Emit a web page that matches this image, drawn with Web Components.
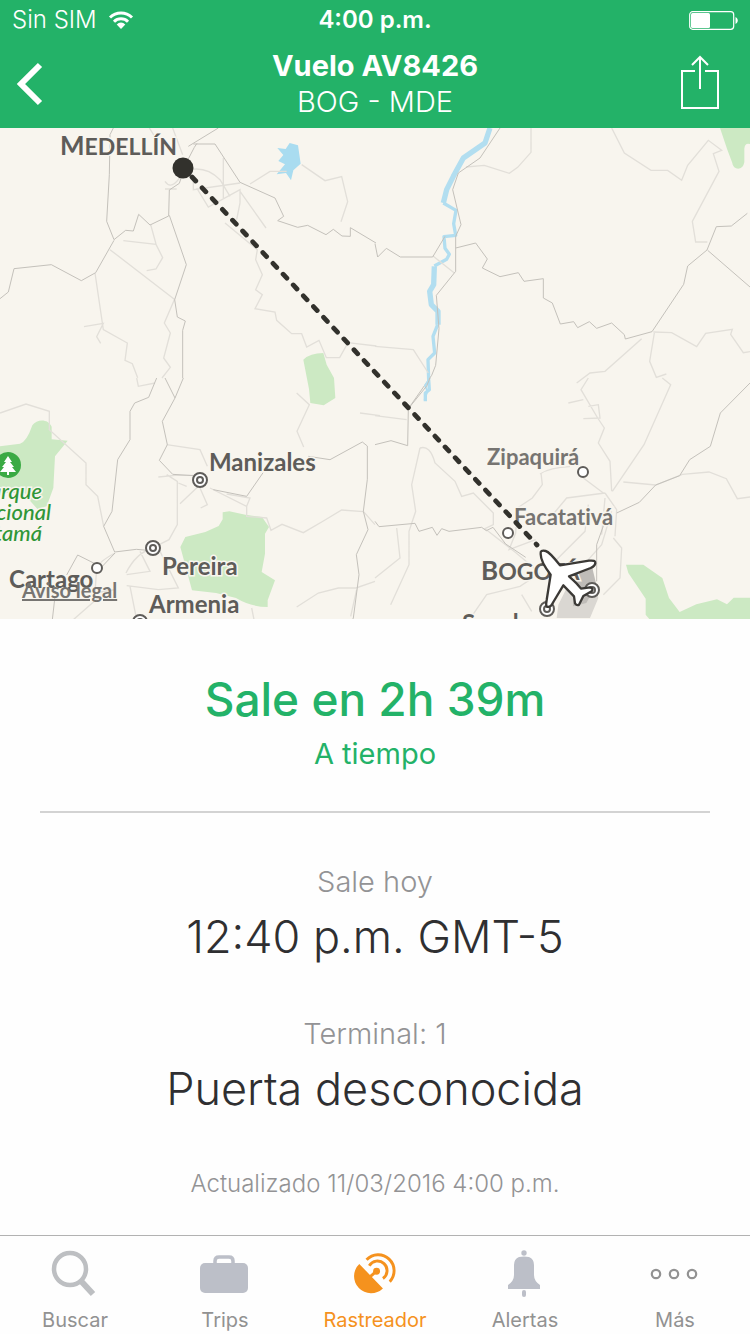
<!DOCTYPE html>
<html lang="es">
  <head>
    <meta charset="UTF-8" />
    <meta name="viewport" content="width=device-width, initial-scale=1.0" />
    <title>Vuelo AV8426</title>
    <style>
      body {
        margin: 0;
        font-family: Inter, "Liberation Sans", sans-serif;
        background-color: #fefefe;
        color: #2f2f31;
      }
    </style>
  </head>
  <body>
    <flight-screen>
      <status-bar slot="top">
        <span slot="carrier">Sin SIM</span>
        <span slot="time">4:00 p.m.</span>
      </status-bar>
      <nav-bar slot="top">
        <span slot="title">Vuelo AV8426</span>
        <span slot="subtitle">BOG - MDE</span>
      </nav-bar>

      <flight-map></flight-map>
      <flight-countdown>
        Sale en 2h 39m
        <span slot="state">A tiempo</span>
      </flight-countdown>
      <flight-details>
        <detail-item label="Sale hoy">12:40 p.m. GMT-5</detail-item>
        <detail-item label="Terminal: 1">Puerta desconocida</detail-item>
        <span slot="updated">Actualizado 11/03/2016 4:00 p.m.</span>
      </flight-details>

      <tab-bar slot="bottom">
        <tab-item icon="search">Buscar</tab-item>
        <tab-item icon="trips">Trips</tab-item>
        <tab-item icon="tracker" active>Rastreador</tab-item>
        <tab-item icon="alerts">Alertas</tab-item>
        <tab-item icon="more">Más</tab-item>
      </tab-bar>
    </flight-screen>
  </body>

  <template id="flight-screen">
    <style>
      :host {
        display: flex;
        flex-direction: column;
        min-height: 100vh;
      }
      header {
        background-color: #23b268;
        color: white;
      }
      main {
        flex: 1;
      }
    </style>
    <header><slot name="top"></slot></header>
    <main><slot></slot></main>
    <slot name="bottom"></slot>
  </template>

  <template id="status-bar">
    <style>
      :host {
        display: grid;
        grid-template-columns: 1fr auto 1fr;
        align-items: center;
        padding: 0 12px;
        font-size: 24px;
        line-height: 40px;
      }
      .left {
        display: flex;
        align-items: center;
        gap: 11px;
        font-weight: 300;
      }
      .time {
        font-weight: 600;
      }
      .battery {
        justify-self: end;
      }
      svg {
        display: block;
      }
    </style>
    <div class="left">
      <slot name="carrier"></slot>
      <svg width="26" height="20" viewBox="0 0 26 20" fill="none" stroke="white" stroke-width="3">
        <path d="M2 7.5a16 16 0 0 1 22 0" />
        <path d="M6 11.7a10 10 0 0 1 14 0" />
        <path d="M13 19l-4.3-4.6a6 6 0 0 1 8.600 0z" fill="white" stroke="none" />
      </svg>
    </div>
    <div class="time"><slot name="time"></slot></div>
    <svg class="battery" width="49" height="19" viewBox="0 0 49 19">
      <rect x="0.700" y="0.700" width="44" height="17.600" rx="3" fill="none" stroke="white" stroke-width="1.200" />
      <rect x="2" y="2" width="19" height="15" rx="1.500" fill="white" />
      <path d="M46.500 6c3 1.500 3 5.500 0 7z" fill="white" />
    </svg>
  </template>

  <template id="nav-bar">
    <style>
      :host {
        display: grid;
        grid-template-columns: 1fr auto 1fr;
        align-items: center;
        padding: 8px 16px;
      }
      .titles {
        text-align: center;
      }
      h1 {
        margin: 0;
        font-size: 29px;
        line-height: 36px;
        font-weight: 700;
      }
      p {
        margin: 0;
        font-size: 29px;
        line-height: 36px;
        font-weight: 300;
      }
      button {
        border: 0;
        padding: 0;
        background: none;
        color: inherit;
        justify-self: start;
      }
      .share {
        justify-self: end;
        padding: 0 14px 4px;
      }
      svg {
        display: block;
      }
    </style>
    <button aria-label="Atrás">
      <svg width="28" height="44" viewBox="0 0 28 44" fill="none" stroke="currentColor" stroke-width="6">
        <path d="M24 3L5 22l19 19" />
      </svg>
    </button>
    <div class="titles">
      <h1><slot name="title"></slot></h1>
      <p><slot name="subtitle"></slot></p>
    </div>
    <button class="share" aria-label="Compartir">
      <svg width="40" height="54" viewBox="0 0 40 54" fill="none" stroke="currentColor" stroke-width="2">
        <path d="M15 16H2v37h36V16H25M20 34V2M12 10l8-8 8 8" />
      </svg>
    </button>
  </template>

  <!-- The map is split in four tiles, each with its own coordinate system -->
  <template id="flight-map">
    <style>
      :host {
        display: block;
        position: relative;
        overflow: hidden;
        background-color: #f8f5ee;
      }
      .map {
        display: block;
        width: 100%;
        height: auto;
      }
      .tile {
        overflow: visible;
      }
      .park {
        fill: #cce9c3;
      }
      .water {
        fill: none;
        stroke: #b2def0;
        stroke-linejoin: round;
      }
      .road {
        fill: none;
        stroke: #c4c1bb;
        stroke-width: 3;
      }
      .minor {
        fill: none;
        stroke: #e2dfd9;
        stroke-width: 4;
      }
      .label {
        font-family: Lato, sans-serif;
        font-size: 24px;
        font-weight: 700;
        font-variant-ligatures: none;
        fill: #5e5c59;
        stroke: #f8f5ee;
        stroke-width: 3px;
        paint-order: stroke;
      }
      .town {
        font-size: 22px;
        fill: #767471;
      }
      .capital {
        font-size: 23px;
      }
      .initial {
        font-size: 26px;
      }
      .green {
        font-size: 22px;
        font-style: italic;
        font-weight: 500;
        fill: #2f9637;
        text-anchor: end;
      }
      .pin {
        fill: #fff;
        stroke: #5e5c59;
        stroke-width: 2;
      }
      a {
        position: absolute;
        left: 22px;
        bottom: 17px;
        font-family: Lato, sans-serif;
        font-size: 20px;
        line-height: 24px;
        font-weight: 700;
        color: #777572;
      }
    </style>
    <svg class="map" viewBox="0 0 750 491">
      <svg class="tile" width="375" height="250" viewBox="0 0 1125 750">
        <path class="park" d="M910 695q20-20 60-20l10 35 22 40 4 60-35 22-40-7-4-42z" />
        <path d="M832 60l25 3 12-18 25 7 8 55-22 20-7 30-15-22-28 4 25-30-20-10 15-18z" fill="#a9dcf0" />
        <path class="minor" d="M448 0l22 35M518 0l30 80M570 125q50-10 90 30l30 50M670 90v120M580 140v45l140-20M590 180l35 57 95-52v40l-10 50M720 190l78 110M370 338l98 11 20 40-20 34-28 5M452 290l16 58M330 365l195 150M285 435l25 170 72 40-7 52 22 10 16 42M252 596l58-10-20 40 12 20M523 515l-30 70 18 30-20 75 20 28-25 32M675 285l97 80-5 30 20 45-20 45 20 15-22 42 60 10 5 25 45 40h30l15 40 37-20 22 52h40l25-45 85 10M750 168l60-38h50M905 110l70 48 50-12 18 75-20 60M495 160q20 30 50-20M495 183h35" />
        <path class="road" d="M340 0l-10 20-2 120-8 140 22 55 35-28 23 2 16-50 34 32 56-27 2-78 30-20 20-60 25-48 8-12M565 55l90-55M580 48h65l75 115 105 47 26 55-18 13 60 20 30-6 55 28 22-16 26 20 25 1v-26l77 46M508 262l51 148-35 105 8 52 24 12-8 28v143M342 337l-55 97-43 24-90-48-112 12-17 70-25 20" />
      </svg>

      <svg class="tile" x="375" width="375" height="250" viewBox="0 0 1125 750">
        <path class="park" d="M1035 0h95v50q-20-10-22 12v40c-4 28-34 24-36 3l-15-40z" />
        <path class="water" stroke-width="16" d="M345 0l-15 45-65 45-30 55-20 40-10 40M178 415l-2 55-12 20 5 40 20 20v40" />
        <path class="water" stroke-width="10" d="M205 225l38 22-7 40 6 35-35 4 3 35 13 18-8 15-37 20M188 590l-14 35 5 50-20 20 2 60 2 30-12 10v25" />
        <path class="minor" d="M468 0v73l-40 45-25 18-75-24-55 5M710 0l38 75 80 52h50l42 30 18-45 62-75 40 30-25 10 17 53-80 150 10 62h35M835 612l55 2 75 42 27-40 80-12-5 15 38 55 20-3M800 632L690 730l-45 5-40 30M838 615l-14 85 20 48 30-10M0 655l115 10 45 70M173 383l65 52" />
        <path class="road" d="M375 0l-60 90-65 45-17 50 25 105-16 35v35l60-15 35 48-15 27 53 26 55-12 17 26 58-8v58l27 15 24 63 40-7 12 18 35-18 22 20 45-16 38 35 3 13 80-22 95-142 12-55 58-48 28-70 45-2 48-38M998 367l127 110M0 347l8 40 26-26 42 26h97l37-62M242 360v70l-58 72 8 100-10 110-12 30-70 100" />
      </svg>

      <svg class="tile" y="250" width="375" height="250" viewBox="0 0 1125 750">
        <path class="park" d="M0 205l60-8q20-5 37-55c14-20 48-20 58 4v38l48 4-38 47-5 95-20 55-28 8-22-25-15-23H0zM668 403l20-3 48 10 50 7 21 30-12 20v60l-10 55 40 25-22 60v20q-50 0-95-27l-60-15-72-8-35-130 15-30 60-15 40-18 12-20z" />
        <path class="minor" d="M0 105l78-27 70 22v55l110 100v65l35 35 18 90M410 0l5 25 50-10M500 200l100 15 22 50M475 297l50-5h60M500 290l32 20v130l-25 45-40 20M600 320l-60 57M560 325l-25-10M600 330l22 50-20 10M630 330l110 55v30l60 5 13 37 33-18 64 25 60-35 55-33 65 5M890 45l38 35-37 80 20 47M740 385l10-25-70-12M378 585q30-60 80-75M420 520l30 60-70 10M480 520l55 110-60 5-95-12M390 625l20 100M290 570l-5 75 60-10M300 655l-80 70M345 525q-55 30-50 45M890 687l65-42 60-15 53 0 57-20M1070 635l-18 80M755 690l10 50M1080 105l60 8M1090 400l35 40" />
        <path class="road" d="M470 0l-24 58-42 17-14 25v85l-37 60-17 155-25 45 33 77 65-8 35 3M495 0l30 60-38 70 15 70-24 47 40 42 80 5M550 0l-25 60M640 335l100 20 50-72M925 235l65 10 97-53 15 12v100l-12 96 14 55-35 75 8 60-17 130-15 30M345 525l-40 42-72-36-33 60M165 655l-8 70" />
      </svg>

      <svg class="tile" x="375" y="250" width="375" height="250" viewBox="0 0 1125 750">
        <path class="park" d="M753 560h52l57 40 20 60 32 42 50-23 62-15 30 15 20-20h60v91H845l-33-40v-48l-52-77z" />
        <path d="M650 560l10 60 10 40-25 60H545l5-40 30-60 35-40z" fill="#dad7d2" />
        <path d="M600 590l52-20 12 50-30 55-40 10z" fill="#bfbcb8" />
        <path class="water" stroke-width="6" d="M162 5l-12 18 7 15-8 28" />
        <path class="minor" d="M0 113l95 12M135 210l-25 110 12 80-20 60v100l-55 120M135 210q30-10 45 45l60 55 20 45 35-10 60 60v35l-25 12 90 70 60 50M495 288q30-20 90-22M498 285l4 35-30 40-45 30-5 75-20 50 80-30M625 300l60 45M640 0l-22 35 50 85 20 30-18 45 35 55 5 90M580 75l45-10M640 85l30-5 5 40-50 2M862 0l25 20-80 180-95 140M690 345l-115 15-50 60M690 345l35 50-5 80M745 312l97 9 80-32 80-7 52 20 33 60 38-5M640 380l-10 80-90 90M710 400l-30 100-80 90M715 480l25 30-5 90-50 50M690 360l-10 110M65 450l10 90-75 60M290 715l45-65 100-25 60-40M440 650l30 50" />
        <path class="road" d="M165 0l-10 24-55 68-2 111-50-15-48 12M0 430l12 16 108-10 12 24 40-12 14 24 14-20 22 8 98-12 14 10 20-10 38 50 60 40M725 405l68-32 49-52 72-28 30-48 62-40 30-100 89-90M690 430l-25 70v110" />
      </svg>

      <g class="label">
        <text class="capital" x="60" y="27"><tspan class="initial">M</tspan>EDELLÍN</text>
        <text x="209" y="343">Manizales</text>
        <text x="162" y="447">Pereira</text>
        <text x="149" y="485">Armenia</text>
        <text x="9" y="460">Cartago</text>
        <text class="town" x="487" y="337">Zipaquirá</text>
        <text class="town" x="514" y="397">Facatativá</text>
        <text class="capital" x="481" y="452"><tspan class="initial">B</tspan>OGOTÁ</text>
        <text x="462" y="504">Soacha</text>
        <text class="green" x="42" y="371">Parque</text>
        <text class="green" x="51" y="392">Nacional</text>
        <text class="green" x="42" y="413">Tatamá</text>
      </g>

      <circle cx="8" cy="337" r="13" fill="#3aaa44" />
      <path d="M8 328l-4 6h2l-4 5h2l-4 5h7v3h2v-3h7l-4-5h2l-4-5h2z" fill="#fff" />

      <g class="pin">
        <circle cx="200" cy="352" r="7" /><circle cx="200" cy="352" r="3" />
        <circle cx="153" cy="420" r="7" /><circle cx="153" cy="420" r="3" />
        <circle cx="140" cy="494" r="7" /><circle cx="140" cy="494" r="3" />
        <circle cx="592" cy="462" r="7" /><circle cx="592" cy="462" r="3" />
        <circle cx="547" cy="481" r="7" /><circle cx="547" cy="481" r="3" />
        <circle cx="97" cy="440" r="5" />
        <circle cx="583" cy="344" r="5" />
        <circle cx="508" cy="405" r="5" />
      </g>

      <!-- route and plane -->
      <path d="M192 49L537 417" fill="none" stroke="#32312c" stroke-width="4.800" stroke-linecap="round" stroke-dasharray="5.500 9.300" />
      <circle cx="183" cy="40" r="10.500" fill="#32312c" />
      <svg class="tile" x="375" y="250" width="375" height="250" viewBox="0 0 1125 750">
        <path d="M497 528q-2-13 15-9 12 3 43 43l87-14q20-2 19 7-1 9-14 15l-65 25 10 9q14 12 26 28l27-4q12 4 5 12l-25 14-13 26q-6 4-12-4l-3-21-32-33-30 50q-8 18-20 14-3-6 0-20l12-76q-30-38-30-62z" fill="#fff" stroke="#3b3936" stroke-width="7" stroke-linejoin="round" />
      </svg>
    </svg>
    <a href="#legal">Aviso legal</a>
  </template>

  <template id="flight-countdown">
    <style>
      :host {
        display: block;
        margin: 0 40px;
        padding: 48px 0 34px;
        border-bottom: 2px solid #d3d3d3;
        text-align: center;
        color: #23b268;
      }
      h2 {
        margin: 0;
        font-size: 46px;
        line-height: 64px;
        font-weight: 500;
      }
      p {
        margin: 0;
        font-size: 29px;
        line-height: 46px;
      }
    </style>
    <h2><slot></slot></h2>
    <p><slot name="state"></slot></p>
  </template>

  <template id="flight-details">
    <style>
      :host {
        display: flex;
        flex-direction: column;
        gap: 42px;
        padding: 49px 40px 31px;
        text-align: center;
      }
      p {
        margin: 0;
        font-size: 24px;
        line-height: 36px;
        font-weight: 300;
        color: #939395;
      }
    </style>
    <slot></slot>
    <p><slot name="updated"></slot></p>
  </template>

  <template id="detail-item">
    <style>
      :host {
        display: block;
      }
      .label {
        font-size: 29px;
        line-height: 40px;
        font-weight: 300;
        color: #939395;
      }
      .value {
        font-size: 45px;
        line-height: 70px;
        font-weight: 300;
      }
    </style>
    <div class="label"></div>
    <div class="value"><slot></slot></div>
  </template>

  <template id="tab-bar">
    <style>
      :host {
        display: block;
        border-top: 1px solid #b2b2b2;
      }
      nav {
        display: flex;
      }
    </style>
    <nav><slot></slot></nav>
  </template>

  <template id="tab-item">
    <style>
      :host {
        flex: 1;
        color: #929292;
      }
      :host([active]) {
        color: #f5921e;
      }
      a {
        display: flex;
        flex-direction: column;
        align-items: center;
        padding-top: 14px;
        font-size: 20px;
        line-height: 28px;
        gap: 8px;
        color: inherit;
        text-decoration: none;
      }
      svg {
        display: block;
      }
    </style>
    <a href="#"><svg width="50" height="48" viewBox="0 0 50 48"></svg><slot></slot></a>
  </template>

  <script>
    const icons = {
      search: `<g fill="none" stroke="#bdbfc2"><circle cx="20" cy="19" r="16" stroke-width="4.500"/><path d="M31 31l12 13" stroke-width="6"/></g>`,
      trips: `<rect x="0" y="13" width="48" height="30" rx="5" fill="#bcbfc8"/><path d="M15 14v-3q0-4 4-4h10q4 0 4 4v3" fill="none" stroke="#bcbfc8" stroke-width="3.500"/>`,
      tracker: `<g transform="translate(2 3) scale(0.91)"><path d="M8 12L34 39A18.400 18.400 0 0 1 8 12z" fill="#f5921e"/>
        <circle cx="27" cy="20" r="3.800" fill="#f5921e"/>
        <g fill="none" stroke="#f5921e" stroke-width="3.200"><path d="M20 26l7-6"/>
        <path d="M19 14a10.500 10.500 0 1 1 15 14"/><path d="M16 7.500a17.500 17.500 0 1 1 25.500 24"/></g></g>`,
      alerts: `<g fill="#bcbfc8"><circle cx="24" cy="3" r="2.700"/>
        <path d="M19 7q5-1 10 0 5 2 5 8v10q0 6 6 10v4H8v-4q6-4 6-10V15q0-6 5-8z"/><rect x="22" y="40" width="4" height="7" rx="2"/></g>`,
      more: `<g fill="none" stroke="#929292" stroke-width="2.200"><circle cx="6" cy="24" r="4.200"/><circle cx="24" cy="24" r="4.200"/><circle cx="42" cy="24" r="4.200"/></g>`,
    };

    // Every component clones the template that has the same name as its tag
    class BaseElement extends HTMLElement {
      constructor() {
        super();
        const template = document.getElementById(this.localName);
        this.attachShadow({ mode: "open" });
        this.shadowRoot.appendChild(template.content.cloneNode(true));
      }
    }

    class DetailItem extends BaseElement {
      connectedCallback() {
        this.shadowRoot.querySelector(".label").textContent = this.getAttribute("label");
      }
    }

    class TabItem extends BaseElement {
      connectedCallback() {
        this.shadowRoot.querySelector("svg").innerHTML = icons[this.getAttribute("icon")];
        if (this.hasAttribute("active")) {
          this.shadowRoot.querySelector("a").setAttribute("aria-current", "page");
        }
      }
    }

    customElements.define("flight-screen", class extends BaseElement {});
    customElements.define("status-bar", class extends BaseElement {});
    customElements.define("nav-bar", class extends BaseElement {});
    customElements.define("flight-map", class extends BaseElement {});
    customElements.define("flight-countdown", class extends BaseElement {});
    customElements.define("flight-details", class extends BaseElement {});
    customElements.define("detail-item", DetailItem);
    customElements.define("tab-bar", class extends BaseElement {});
    customElements.define("tab-item", TabItem);
  </script>
</html>
